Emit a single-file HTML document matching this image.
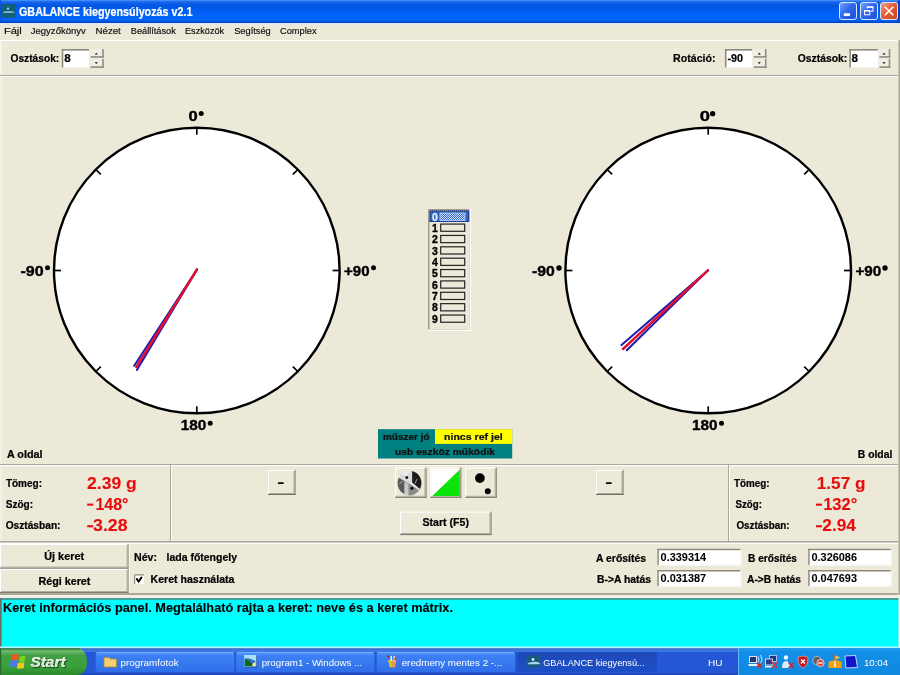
<!DOCTYPE html><html><head><meta charset="utf-8"><title>GBALANCE</title><style>
*{margin:0;padding:0;box-sizing:border-box}
html,body{width:900px;height:675px;overflow:hidden;background:#ece9d8;font-family:"Liberation Sans",sans-serif}
svg{position:absolute;left:0;top:0;will-change:transform;filter:blur(0.3px)}
text{font-family:"Liberation Sans",sans-serif}
</style></head><body>
<svg width="900" height="675" viewBox="0 0 900 675">
<defs>
<linearGradient id="tg" x1="0" y1="0" x2="0" y2="1">
<stop offset="0" stop-color="#4a9bff"/><stop offset="0.08" stop-color="#1a64ec"/><stop offset="0.25" stop-color="#0056e4"/>
<stop offset="0.6" stop-color="#0062f8"/><stop offset="0.85" stop-color="#0066ff"/><stop offset="0.94" stop-color="#0054d8"/><stop offset="1" stop-color="#003cb0"/>
</linearGradient>
<linearGradient id="bg1" x1="0" y1="0" x2="1" y2="1">
<stop offset="0" stop-color="#7aa6ff"/><stop offset="0.45" stop-color="#2f68ee"/><stop offset="1" stop-color="#1a4fd8"/>
</linearGradient>
<linearGradient id="bg2" x1="0" y1="0" x2="1" y2="1">
<stop offset="0" stop-color="#f4a58c"/><stop offset="0.45" stop-color="#e3603a"/><stop offset="1" stop-color="#c94420"/>
</linearGradient>
<linearGradient id="tbar" x1="0" y1="0" x2="0" y2="1">
<stop offset="0" stop-color="#3c81f3"/><stop offset="0.12" stop-color="#2d6fe8"/><stop offset="0.5" stop-color="#245edb"/><stop offset="0.9" stop-color="#1f56d2"/><stop offset="1" stop-color="#1941a5"/>
</linearGradient>
<linearGradient id="tbtn" x1="0" y1="0" x2="0" y2="1">
<stop offset="0" stop-color="#5b9cfb"/><stop offset="0.2" stop-color="#3c80f4"/><stop offset="1" stop-color="#2f6fea"/>
</linearGradient>
<linearGradient id="tbtna" x1="0" y1="0" x2="0" y2="1">
<stop offset="0" stop-color="#1e48b8"/><stop offset="1" stop-color="#1c4fc8"/>
</linearGradient>
<linearGradient id="start" x1="0" y1="0" x2="0" y2="1">
<stop offset="0" stop-color="#5aa85c"/><stop offset="0.12" stop-color="#6ab86c"/><stop offset="0.25" stop-color="#42a044"/><stop offset="0.7" stop-color="#38a03a"/><stop offset="1" stop-color="#2a8a2c"/>
</linearGradient>
<linearGradient id="tray" x1="0" y1="0" x2="0" y2="1">
<stop offset="0" stop-color="#1c9ef0"/><stop offset="0.15" stop-color="#1290e8"/><stop offset="1" stop-color="#0f88de"/>
</linearGradient>
<radialGradient id="disc" cx="0.45" cy="0.4" r="0.6">
<stop offset="0" stop-color="#f0f0f0"/><stop offset="0.5" stop-color="#9a9a9a"/><stop offset="1" stop-color="#303030"/>
</radialGradient>
<filter id="bl2" x="-0.2" y="-0.2" width="1.4" height="1.4"><feGaussianBlur stdDeviation="0.5"/></filter>
<pattern id="hatch" width="2" height="2" patternUnits="userSpaceOnUse"><rect width="2" height="2" fill="#3a68c8"/><rect width="1" height="1" fill="#c8e0ff"/><rect x="1" y="1" width="1" height="1" fill="#c8e0ff"/></pattern>
</defs>
<rect x="0" y="0" width="900" height="23" fill="url(#tg)"/>
<rect x="0" y="23" width="900" height="1.5" fill="#dfe6f4"/>
<rect x="0" y="0" width="1.2" height="23" fill="#0a48d8" opacity="0.7"/>
<rect x="1.8" y="4" width="14" height="13.8" fill="#125f78"/>
<g filter="url(#bl2)" opacity="0.75"><circle cx="8" cy="8.6" r="1.2" fill="#d8ecff"/><path d="M2.8 12.4 Q5 10.5 8 11.2 Q11 10.5 14.5 12.2 L14.2 13 H3 Z" fill="#a0d0e0"/></g>
<text x="19" y="16" font-size="12.2" fill="#fff" font-weight="bold" textLength="173.5" lengthAdjust="spacingAndGlyphs" stroke="#fff" stroke-width="0.22">GBALANCE kiegyensúlyozás v2.1</text>
<rect x="839.5" y="2.5" width="17" height="17" rx="2.5" fill="url(#bg1)" stroke="#dce8ff" stroke-width="1"/>
<rect x="860.5" y="2.5" width="17" height="17" rx="2.5" fill="url(#bg1)" stroke="#dce8ff" stroke-width="1"/>
<rect x="880.5" y="2.5" width="17" height="17" rx="2.5" fill="url(#bg2)" stroke="#dce8ff" stroke-width="1"/>
<rect x="843.8" y="13.2" width="6.1" height="2.8" fill="#fff"/>
<rect x="864.6" y="10.5" width="5.2" height="4.3" fill="none" stroke="#fff" stroke-width="1"/><rect x="864.1" y="10" width="6" height="1.6" fill="#fff"/>
<path d="M867.3 8.5V6.9H873V11.2H870.5" fill="none" stroke="#fff" stroke-width="1"/><rect x="866.8" y="6.4" width="6.7" height="1.4" fill="#fff"/>
<path d="M884.8 6.8L893.3 15.2M893.3 6.8L884.8 15.2" stroke="#fff" stroke-width="1.6"/>
<rect x="898" y="0" width="2" height="23" fill="#0a2fa0" opacity="0.6"/>
<text x="3.9000000000000004" y="34" font-size="9.4" fill="#111" textLength="17.9" lengthAdjust="spacingAndGlyphs" stroke="#111" stroke-width="0.18">Fájl</text>
<text x="30.7" y="34" font-size="9.4" fill="#111" textLength="55.2" lengthAdjust="spacingAndGlyphs" stroke="#111" stroke-width="0.18">Jegyzőkönyv</text>
<text x="95.5" y="34" font-size="9.4" fill="#111" textLength="25.3" lengthAdjust="spacingAndGlyphs" stroke="#111" stroke-width="0.18">Nézet</text>
<text x="130.8" y="34" font-size="9.4" fill="#111" textLength="45.0" lengthAdjust="spacingAndGlyphs" stroke="#111" stroke-width="0.18">Beállítások</text>
<text x="185.0" y="34" font-size="9.4" fill="#111" textLength="39.2" lengthAdjust="spacingAndGlyphs" stroke="#111" stroke-width="0.18">Eszközök</text>
<text x="234.2" y="34" font-size="9.4" fill="#111" textLength="36.6" lengthAdjust="spacingAndGlyphs" stroke="#111" stroke-width="0.18">Segítség</text>
<text x="280.0" y="34" font-size="9.4" fill="#111" textLength="36.6" lengthAdjust="spacingAndGlyphs" stroke="#111" stroke-width="0.18">Complex</text>
<rect x="0" y="40" width="898" height="1" fill="#fff"/>
<rect x="0.5" y="40" width="1" height="35" fill="#fff"/>
<rect x="0.5" y="77" width="1" height="387" fill="#fafaf6"/>
<rect x="0.5" y="466" width="1" height="75" fill="#fafaf6"/>
<rect x="0" y="75" width="898" height="1" fill="#aca899"/>
<rect x="0" y="76" width="898" height="1" fill="#fff"/>
<rect x="898.5" y="40" width="1.5" height="555" fill="#aca899"/>
<text x="10.5" y="61.6" font-size="10.9" fill="#000" font-weight="bold" textLength="48.7" lengthAdjust="spacingAndGlyphs" stroke="#000" stroke-width="0.22">Osztások:</text>
<rect x="61.7" y="49" width="27.4" height="18.5" fill="#fff"/>
<rect x="61.7" y="49" width="27.4" height="1.6" fill="#8d8a7c"/>
<rect x="61.7" y="49" width="1.6" height="18.5" fill="#8d8a7c"/>
<text x="64.3" y="61.8" font-size="11.2" fill="#000" font-weight="bold" textLength="6.5" lengthAdjust="spacingAndGlyphs" stroke="#000" stroke-width="0.22">8</text>
<rect x="89.1" y="49" width="14.7" height="8.7" fill="#f0eee4"/>
<rect x="102.2" y="49" width="1.6" height="8.7" fill="#8f8c7e"/>
<rect x="90.6" y="56.1" width="13.2" height="1.6" fill="#8f8c7e"/>
<path d="M94.69999999999999 54.6L96.29999999999998 52.7L97.89999999999998 54.6Z" fill="#111"/>
<rect x="89.1" y="58.9" width="14.7" height="9" fill="#f0eee4"/>
<rect x="102.2" y="58.9" width="1.6" height="9" fill="#8f8c7e"/>
<rect x="90.6" y="66.30000000000001" width="13.2" height="1.6" fill="#8f8c7e"/>
<path d="M94.69999999999999 62.199999999999996L96.29999999999998 64.0L97.89999999999998 62.199999999999996Z" fill="#111"/>
<text x="673.1" y="61.6" font-size="10.9" fill="#000" font-weight="bold" textLength="42.5" lengthAdjust="spacingAndGlyphs" stroke="#000" stroke-width="0.22">Rotáció:</text>
<rect x="724.9" y="49" width="27.5" height="18.5" fill="#fff"/>
<rect x="724.9" y="49" width="27.5" height="1.6" fill="#8d8a7c"/>
<rect x="724.9" y="49" width="1.6" height="18.5" fill="#8d8a7c"/>
<text x="727.5" y="61.8" font-size="11.2" fill="#000" font-weight="bold" textLength="15.6" lengthAdjust="spacingAndGlyphs" stroke="#000" stroke-width="0.22">-90</text>
<rect x="752.4" y="49" width="14.1" height="8.7" fill="#f0eee4"/>
<rect x="764.9" y="49" width="1.6" height="8.7" fill="#8f8c7e"/>
<rect x="753.9" y="56.1" width="12.6" height="1.6" fill="#8f8c7e"/>
<path d="M757.6999999999999 54.6L759.3 52.7L760.9 54.6Z" fill="#111"/>
<rect x="752.4" y="58.9" width="14.1" height="9" fill="#f0eee4"/>
<rect x="764.9" y="58.9" width="1.6" height="9" fill="#8f8c7e"/>
<rect x="753.9" y="66.30000000000001" width="12.6" height="1.6" fill="#8f8c7e"/>
<path d="M757.6999999999999 62.199999999999996L759.3 64.0L760.9 62.199999999999996Z" fill="#111"/>
<text x="797.8" y="61.6" font-size="10.9" fill="#000" font-weight="bold" textLength="49.4" lengthAdjust="spacingAndGlyphs" stroke="#000" stroke-width="0.22">Osztások:</text>
<rect x="849.3" y="49" width="28.6" height="18.5" fill="#fff"/>
<rect x="849.3" y="49" width="28.6" height="1.6" fill="#8d8a7c"/>
<rect x="849.3" y="49" width="1.6" height="18.5" fill="#8d8a7c"/>
<text x="851.5" y="61.8" font-size="11.2" fill="#000" font-weight="bold" textLength="6.5" lengthAdjust="spacingAndGlyphs" stroke="#000" stroke-width="0.22">8</text>
<rect x="877.9" y="49" width="12.4" height="8.7" fill="#f0eee4"/>
<rect x="888.6999999999999" y="49" width="1.6" height="8.7" fill="#8f8c7e"/>
<rect x="879.4" y="56.1" width="10.9" height="1.6" fill="#8f8c7e"/>
<path d="M882.35 54.6L883.95 52.7L885.5500000000001 54.6Z" fill="#111"/>
<rect x="877.9" y="58.9" width="12.4" height="9" fill="#f0eee4"/>
<rect x="888.6999999999999" y="58.9" width="1.6" height="9" fill="#8f8c7e"/>
<rect x="879.4" y="66.30000000000001" width="10.9" height="1.6" fill="#8f8c7e"/>
<path d="M882.35 62.199999999999996L883.95 64.0L885.5500000000001 62.199999999999996Z" fill="#111"/>
<circle cx="196.8" cy="270.5" r="142.8" fill="#fff" stroke="#000" stroke-width="2.4"/>
<line x1="196.80" y1="128.00" x2="196.80" y2="134.70" stroke="#000" stroke-width="1.7"/>
<line x1="297.56" y1="169.74" x2="292.83" y2="174.47" stroke="#000" stroke-width="1.7"/>
<line x1="339.30" y1="270.50" x2="332.60" y2="270.50" stroke="#000" stroke-width="1.7"/>
<line x1="297.56" y1="371.26" x2="292.83" y2="366.53" stroke="#000" stroke-width="1.7"/>
<line x1="196.80" y1="413.00" x2="196.80" y2="406.30" stroke="#000" stroke-width="1.7"/>
<line x1="96.04" y1="371.26" x2="100.77" y2="366.53" stroke="#000" stroke-width="1.7"/>
<line x1="54.30" y1="270.50" x2="61.00" y2="270.50" stroke="#000" stroke-width="1.7"/>
<line x1="96.04" y1="169.74" x2="100.77" y2="174.47" stroke="#000" stroke-width="1.7"/>
<circle cx="708.2" cy="270.5" r="142.8" fill="#fff" stroke="#000" stroke-width="2.4"/>
<line x1="708.20" y1="128.00" x2="708.20" y2="134.70" stroke="#000" stroke-width="1.7"/>
<line x1="808.96" y1="169.74" x2="804.23" y2="174.47" stroke="#000" stroke-width="1.7"/>
<line x1="850.70" y1="270.50" x2="844.00" y2="270.50" stroke="#000" stroke-width="1.7"/>
<line x1="808.96" y1="371.26" x2="804.23" y2="366.53" stroke="#000" stroke-width="1.7"/>
<line x1="708.20" y1="413.00" x2="708.20" y2="406.30" stroke="#000" stroke-width="1.7"/>
<line x1="607.44" y1="371.26" x2="612.17" y2="366.53" stroke="#000" stroke-width="1.7"/>
<line x1="565.70" y1="270.50" x2="572.40" y2="270.50" stroke="#000" stroke-width="1.7"/>
<line x1="607.44" y1="169.74" x2="612.17" y2="174.47" stroke="#000" stroke-width="1.7"/>
<text x="188.4" y="121" font-size="14.6" fill="#000" font-weight="bold" textLength="9.2" lengthAdjust="spacingAndGlyphs" stroke="#000" stroke-width="0.4">0</text>
<circle cx="201.2" cy="113.5" r="2.5" fill="#000"/>
<text x="20.4" y="275.7" font-size="14.6" fill="#000" font-weight="bold" textLength="23.2" lengthAdjust="spacingAndGlyphs" stroke="#000" stroke-width="0.4">-90</text>
<circle cx="47.5" cy="267.8" r="2.5" fill="#000"/>
<text x="344.09999999999997" y="275.7" font-size="14.6" fill="#000" font-weight="bold" textLength="25.5" lengthAdjust="spacingAndGlyphs" stroke="#000" stroke-width="0.4">+90</text>
<circle cx="373.5" cy="267.8" r="2.5" fill="#000"/>
<text x="180.70000000000002" y="430.3" font-size="14.6" fill="#000" font-weight="bold" textLength="25.6" lengthAdjust="spacingAndGlyphs" stroke="#000" stroke-width="0.4">180</text>
<circle cx="210.2" cy="423.2" r="2.5" fill="#000"/>
<text x="699.6999999999999" y="121" font-size="14.6" fill="#000" font-weight="bold" textLength="10.2" lengthAdjust="spacingAndGlyphs" stroke="#000" stroke-width="0.4">0</text>
<circle cx="712.65" cy="113.64999999999998" r="2.6499999999999773" fill="#000"/>
<text x="532.1" y="275.7" font-size="14.6" fill="#000" font-weight="bold" textLength="22.8" lengthAdjust="spacingAndGlyphs" stroke="#000" stroke-width="0.4">-90</text>
<circle cx="559.0" cy="268.00000000000006" r="2.7000000000000455" fill="#000"/>
<text x="855.4" y="275.7" font-size="14.6" fill="#000" font-weight="bold" textLength="25.9" lengthAdjust="spacingAndGlyphs" stroke="#000" stroke-width="0.4">+90</text>
<circle cx="885.0" cy="268.00000000000006" r="2.7000000000000455" fill="#000"/>
<text x="692.1" y="430.3" font-size="14.6" fill="#000" font-weight="bold" textLength="25.5" lengthAdjust="spacingAndGlyphs" stroke="#000" stroke-width="0.4">180</text>
<circle cx="721.5" cy="423.2" r="2.5" fill="#000"/>
<g stroke="#1c1cb4" stroke-width="2" stroke-linecap="round">
<line x1="197" y1="269.5" x2="134.2" y2="365.8"/><line x1="197" y1="269.5" x2="136.9" y2="369.9"/>
<line x1="708" y1="270.3" x2="621.5" y2="345.1"/><line x1="708" y1="270.3" x2="626.8" y2="350.2"/>
</g><g stroke="#e4102c" stroke-width="2.4" stroke-linecap="round">
<line x1="197" y1="269.5" x2="136.3" y2="367"/><line x1="708" y1="270.3" x2="623" y2="349"/>
</g>
<rect x="428" y="209" width="43" height="122" fill="#fff"/>
<rect x="428" y="209" width="41.5" height="120.5" fill="#9d9a8c"/>
<rect x="429.5" y="210.5" width="40" height="119" fill="#ece9d8"/>
<rect x="429.5" y="210.5" width="39.7" height="11.5" fill="#3462c0"/>
<rect x="430" y="211" width="38.7" height="10.5" fill="none" stroke="#0a1a40" stroke-width="1" stroke-dasharray="1 1"/>
<text x="432" y="220.5" font-size="10.2" fill="#e0ecff" font-weight="bold" textLength="5.8" lengthAdjust="spacingAndGlyphs" stroke="#e0ecff" stroke-width="0.35">0</text>
<rect x="440" y="213.00" width="25" height="7.6" fill="url(#hatch)" stroke="#b8d4ff" stroke-width="0.8"/>
<text x="432" y="231.87" font-size="10.2" fill="#000" font-weight="bold" textLength="5.8" lengthAdjust="spacingAndGlyphs" stroke="#000" stroke-width="0.35">1</text>
<rect x="440.7" y="224.07" width="24" height="7.2" fill="#ece9d8" stroke="#222" stroke-width="1.2"/>
<text x="432" y="243.24" font-size="10.2" fill="#000" font-weight="bold" textLength="5.8" lengthAdjust="spacingAndGlyphs" stroke="#000" stroke-width="0.35">2</text>
<rect x="440.7" y="235.44" width="24" height="7.2" fill="#ece9d8" stroke="#222" stroke-width="1.2"/>
<text x="432" y="254.61" font-size="10.2" fill="#000" font-weight="bold" textLength="5.8" lengthAdjust="spacingAndGlyphs" stroke="#000" stroke-width="0.35">3</text>
<rect x="440.7" y="246.81" width="24" height="7.2" fill="#ece9d8" stroke="#222" stroke-width="1.2"/>
<text x="432" y="265.98" font-size="10.2" fill="#000" font-weight="bold" textLength="5.8" lengthAdjust="spacingAndGlyphs" stroke="#000" stroke-width="0.35">4</text>
<rect x="440.7" y="258.18" width="24" height="7.2" fill="#ece9d8" stroke="#222" stroke-width="1.2"/>
<text x="432" y="277.35" font-size="10.2" fill="#000" font-weight="bold" textLength="5.8" lengthAdjust="spacingAndGlyphs" stroke="#000" stroke-width="0.35">5</text>
<rect x="440.7" y="269.55" width="24" height="7.2" fill="#ece9d8" stroke="#222" stroke-width="1.2"/>
<text x="432" y="288.72" font-size="10.2" fill="#000" font-weight="bold" textLength="5.8" lengthAdjust="spacingAndGlyphs" stroke="#000" stroke-width="0.35">6</text>
<rect x="440.7" y="280.92" width="24" height="7.2" fill="#ece9d8" stroke="#222" stroke-width="1.2"/>
<text x="432" y="300.09" font-size="10.2" fill="#000" font-weight="bold" textLength="5.8" lengthAdjust="spacingAndGlyphs" stroke="#000" stroke-width="0.35">7</text>
<rect x="440.7" y="292.29" width="24" height="7.2" fill="#ece9d8" stroke="#222" stroke-width="1.2"/>
<text x="432" y="311.46" font-size="10.2" fill="#000" font-weight="bold" textLength="5.8" lengthAdjust="spacingAndGlyphs" stroke="#000" stroke-width="0.35">8</text>
<rect x="440.7" y="303.66" width="24" height="7.2" fill="#ece9d8" stroke="#222" stroke-width="1.2"/>
<text x="432" y="322.83" font-size="10.2" fill="#000" font-weight="bold" textLength="5.8" lengthAdjust="spacingAndGlyphs" stroke="#000" stroke-width="0.35">9</text>
<rect x="440.7" y="315.03" width="24" height="7.2" fill="#ece9d8" stroke="#222" stroke-width="1.2"/>
<rect x="378" y="429.2" width="134.2" height="29.3" fill="#008080"/>
<rect x="435" y="429.2" width="77.2" height="14.7" fill="#ffff00"/>
<text x="383" y="439.7" font-size="9.4" fill="#101010" font-weight="bold" textLength="46.5" lengthAdjust="spacingAndGlyphs" stroke="#101010" stroke-width="0.22">műszer jó</text>
<text x="444" y="439.7" font-size="9.8" fill="#101010" font-weight="bold" textLength="58.8" lengthAdjust="spacingAndGlyphs" stroke="#101010" stroke-width="0.22">nincs ref jel</text>
<text x="395" y="454.8" font-size="9.7" fill="#101010" font-weight="bold" textLength="100" lengthAdjust="spacingAndGlyphs" stroke="#101010" stroke-width="0.22">usb eszköz működik</text>
<text x="7" y="457.5" font-size="10.4" fill="#000" font-weight="bold" textLength="35.5" lengthAdjust="spacingAndGlyphs" stroke="#000" stroke-width="0.22">A oldal</text>
<text x="857.8" y="457.5" font-size="10.4" fill="#000" font-weight="bold" textLength="34.5" lengthAdjust="spacingAndGlyphs" stroke="#000" stroke-width="0.22">B oldal</text>
<rect x="0" y="464" width="898" height="1" fill="#aca899"/>
<rect x="0" y="465" width="898" height="1" fill="#fff"/>
<rect x="170" y="465" width="1" height="77" fill="#aca899"/>
<rect x="171" y="466" width="1" height="76" fill="#fff"/>
<rect x="728" y="465" width="1" height="77" fill="#aca899"/>
<rect x="729" y="466" width="1" height="76" fill="#fff"/>
<rect x="0" y="541" width="898" height="1.5" fill="#aca899"/>
<rect x="0" y="543" width="898" height="1" fill="#fff"/>
<text x="5.9" y="487" font-size="10.2" fill="#000" font-weight="bold" textLength="36.1" lengthAdjust="spacingAndGlyphs" stroke="#000" stroke-width="0.22">Tömeg:</text>
<text x="5.7" y="508" font-size="10.2" fill="#000" font-weight="bold" textLength="27.3" lengthAdjust="spacingAndGlyphs" stroke="#000" stroke-width="0.22">Szög:</text>
<text x="5.7" y="529" font-size="10.2" fill="#000" font-weight="bold" textLength="54.8" lengthAdjust="spacingAndGlyphs" stroke="#000" stroke-width="0.22">Osztásban:</text>
<text x="733.9000000000001" y="487" font-size="10.2" fill="#000" font-weight="bold" textLength="35.6" lengthAdjust="spacingAndGlyphs" stroke="#000" stroke-width="0.22">Tömeg:</text>
<text x="735.5" y="508" font-size="10.2" fill="#000" font-weight="bold" textLength="26.5" lengthAdjust="spacingAndGlyphs" stroke="#000" stroke-width="0.22">Szög:</text>
<text x="736.4000000000001" y="529" font-size="10.2" fill="#000" font-weight="bold" textLength="53.1" lengthAdjust="spacingAndGlyphs" stroke="#000" stroke-width="0.22">Osztásban:</text>
<text x="87.10000000000001" y="488.5" font-size="17.0" fill="#e80c0c" font-weight="bold" textLength="49.7" lengthAdjust="spacingAndGlyphs" stroke="#e80c0c" stroke-width="0.1">2.39 g</text>
<rect x="87.2" y="503.6" width="6.0" height="2.1" fill="#e80c0c"/>
<text x="95.4" y="509.7" font-size="15.71" fill="#e80c0c" font-weight="bold" textLength="33.1" lengthAdjust="spacingAndGlyphs" stroke="#e80c0c" stroke-width="0.1">148°</text>
<rect x="87.2" y="525.2" width="6.0" height="2.1" fill="#e80c0c"/>
<text x="93.10000000000001" y="530.8" font-size="16.43" fill="#e80c0c" font-weight="bold" textLength="34.5" lengthAdjust="spacingAndGlyphs" stroke="#e80c0c" stroke-width="0.1">3.28</text>
<text x="816.8" y="488.5" font-size="17.0" fill="#e80c0c" font-weight="bold" textLength="48.7" lengthAdjust="spacingAndGlyphs" stroke="#e80c0c" stroke-width="0.1">1.57 g</text>
<rect x="816" y="503.6" width="6" height="2.1" fill="#e80c0c"/>
<text x="823.1999999999999" y="509.7" font-size="17.14" fill="#e80c0c" font-weight="bold" textLength="34.1" lengthAdjust="spacingAndGlyphs" stroke="#e80c0c" stroke-width="0.1">132°</text>
<rect x="816" y="525.2" width="6" height="2.1" fill="#e80c0c"/>
<text x="822.3" y="530.8" font-size="17.0" fill="#e80c0c" font-weight="bold" textLength="33.6" lengthAdjust="spacingAndGlyphs" stroke="#e80c0c" stroke-width="0.1">2.94</text>
<rect x="268" y="470" width="27.5" height="25" fill="#ece9d8"/>
<rect x="268" y="470" width="27.5" height="1" fill="#fff"/>
<rect x="268" y="470" width="1" height="25" fill="#fff"/>
<rect x="294.5" y="470" width="1" height="25" fill="#716f64"/>
<rect x="268" y="494" width="27.5" height="1" fill="#716f64"/>
<rect x="293.5" y="471" width="1" height="23" fill="#aca899"/>
<rect x="269" y="493" width="25.5" height="1" fill="#aca899"/>
<rect x="277.8" y="482.2" width="6" height="1.9" rx="0.8" fill="#000"/>
<rect x="596" y="470" width="27.5" height="25" fill="#ece9d8"/>
<rect x="596" y="470" width="27.5" height="1" fill="#fff"/>
<rect x="596" y="470" width="1" height="25" fill="#fff"/>
<rect x="622.5" y="470" width="1" height="25" fill="#716f64"/>
<rect x="596" y="494" width="27.5" height="1" fill="#716f64"/>
<rect x="621.5" y="471" width="1" height="23" fill="#aca899"/>
<rect x="597" y="493" width="25.5" height="1" fill="#aca899"/>
<rect x="605.8" y="482.2" width="6" height="1.9" rx="0.8" fill="#000"/>
<rect x="395" y="467.5" width="31.5" height="30.3" fill="#ece9d8"/>
<rect x="395" y="467.5" width="31.5" height="1" fill="#fff"/>
<rect x="395" y="467.5" width="1" height="30.3" fill="#fff"/>
<rect x="425.5" y="467.5" width="1" height="30.3" fill="#716f64"/>
<rect x="395" y="496.8" width="31.5" height="1" fill="#716f64"/>
<rect x="424.5" y="468.5" width="1" height="28.3" fill="#aca899"/>
<rect x="396" y="495.8" width="29.5" height="1" fill="#aca899"/>
<rect x="430.3" y="467.5" width="31" height="30.3" fill="#ece9d8"/>
<rect x="430.3" y="467.5" width="31" height="1" fill="#fff"/>
<rect x="430.3" y="467.5" width="1" height="30.3" fill="#fff"/>
<rect x="460.3" y="467.5" width="1" height="30.3" fill="#716f64"/>
<rect x="430.3" y="496.8" width="31" height="1" fill="#716f64"/>
<rect x="459.3" y="468.5" width="1" height="28.3" fill="#aca899"/>
<rect x="431.3" y="495.8" width="29" height="1" fill="#aca899"/>
<rect x="465.2" y="467.5" width="31.5" height="30.3" fill="#ece9d8"/>
<rect x="465.2" y="467.5" width="31.5" height="1" fill="#fff"/>
<rect x="465.2" y="467.5" width="1" height="30.3" fill="#fff"/>
<rect x="495.7" y="467.5" width="1" height="30.3" fill="#716f64"/>
<rect x="465.2" y="496.8" width="31.5" height="1" fill="#716f64"/>
<rect x="494.7" y="468.5" width="1" height="28.3" fill="#aca899"/>
<rect x="466.2" y="495.8" width="29.5" height="1" fill="#aca899"/>
<clipPath id="dc"><ellipse cx="409.5" cy="483.1" rx="11.9" ry="12.4"/></clipPath>
<filter id="bl" x="-0.1" y="-0.1" width="1.2" height="1.2"><feGaussianBlur stdDeviation="0.6"/></filter>
<g clip-path="url(#dc)"><g filter="url(#bl)">
<rect x="396" y="469" width="28" height="28" fill="#8a8a8a"/>
<path d="M396 476 L405 481.5 L404.5 497 L396 497 Z" fill="#5a5a5a"/>
<path d="M404.3 481.2 L408.5 484.3 L408.5 497 L404.3 497 Z" fill="#c8c8c8"/>
<path d="M396 469 L412.2 469 L412.2 483 L419.5 489.8 L405 481.3 L396 476 Z" fill="#dadada"/>
<path d="M412.2 469 L424 469 L424 488 L419.5 489.8 L412.2 483 Z" fill="#1c1c1c"/>
<path d="M401 470 L410 470 L407 476 L400 474 Z" fill="#f4f4f4" opacity="0.7"/>
<path d="M415 483.5 L417 479" stroke="#9a9a9a" stroke-width="1"/><path d="M399.5 483.5 L402.5 481.5" stroke="#b8b8b8" stroke-width="1"/>
</g><path d="M410.5 482.5 L419.5 489.8" stroke="#f2f2f2" stroke-width="1.8" opacity="0.9"/>
</g>
<circle cx="406.8" cy="477.6" r="1.4" fill="#000"/><circle cx="411.9" cy="488.2" r="1.5" fill="#000"/>
<rect x="431.5" y="469.2" width="28.3" height="26.8" fill="#fff"/>
<path d="M432.3 496 L459.8 469.5 L459.8 496 Z" fill="#08e408"/>
<circle cx="479.9" cy="478.1" r="4.9" fill="#000"/><circle cx="487.8" cy="491.3" r="3" fill="#000"/>
<rect x="400" y="511.6" width="91.5" height="23.5" fill="#ece9d8"/>
<rect x="400" y="511.6" width="91.5" height="1" fill="#fff"/>
<rect x="400" y="511.6" width="1" height="23.5" fill="#fff"/>
<rect x="490.5" y="511.6" width="1" height="23.5" fill="#716f64"/>
<rect x="400" y="534.1" width="91.5" height="1" fill="#716f64"/>
<rect x="489.5" y="512.6" width="1" height="21.5" fill="#aca899"/>
<rect x="401" y="533.1" width="89.5" height="1" fill="#aca899"/>
<text x="422.5" y="526.3" font-size="10.9" fill="#000" font-weight="bold" textLength="46.5" lengthAdjust="spacingAndGlyphs" stroke="#000" stroke-width="0.22">Start (F5)</text>
<rect x="0" y="544" width="128.7" height="24.6" fill="#ece9d8"/>
<rect x="0" y="544" width="128.7" height="1" fill="#fff"/>
<rect x="0" y="544" width="1" height="24.6" fill="#fff"/>
<rect x="127.69999999999999" y="544" width="1" height="24.6" fill="#716f64"/>
<rect x="0" y="567.6" width="128.7" height="1" fill="#716f64"/>
<rect x="126.69999999999999" y="545" width="1" height="22.6" fill="#aca899"/>
<rect x="1" y="566.6" width="126.69999999999999" height="1" fill="#aca899"/>
<rect x="0" y="569" width="128.7" height="24.1" fill="#ece9d8"/>
<rect x="0" y="569" width="128.7" height="1" fill="#fff"/>
<rect x="0" y="569" width="1" height="24.1" fill="#fff"/>
<rect x="127.69999999999999" y="569" width="1" height="24.1" fill="#716f64"/>
<rect x="0" y="592.1" width="128.7" height="1" fill="#716f64"/>
<rect x="126.69999999999999" y="570" width="1" height="22.1" fill="#aca899"/>
<rect x="1" y="591.1" width="126.69999999999999" height="1" fill="#aca899"/>
<text x="44.2" y="560" font-size="10.5" fill="#000" font-weight="bold" textLength="40" lengthAdjust="spacingAndGlyphs" stroke="#000" stroke-width="0.22">Új keret</text>
<text x="38.4" y="584.5" font-size="10.5" fill="#000" font-weight="bold" textLength="52" lengthAdjust="spacingAndGlyphs" stroke="#000" stroke-width="0.22">Régi keret</text>
<rect x="128.7" y="544" width="1" height="49" fill="#fbfaf4"/>
<rect x="0" y="593" width="898" height="2" fill="#aca899"/>
<rect x="0" y="595" width="898" height="3" fill="#f2f0e6"/>
<text x="134" y="561.4" font-size="10.2" fill="#000" font-weight="bold" textLength="23" lengthAdjust="spacingAndGlyphs" stroke="#000" stroke-width="0.22">Név:</text>
<text x="166.5" y="561.4" font-size="10.4" fill="#000" font-weight="bold" textLength="70.5" lengthAdjust="spacingAndGlyphs" stroke="#000" stroke-width="0.22">lada főtengely</text>
<rect x="134" y="574.2" width="10" height="9.8" fill="#fff"/>
<path d="M134.6 574.8H144M134.6 574.8V584" stroke="#8d8a7c" stroke-width="1.2"/>
<path d="M136.4 578.4L138.6 581.6L141.9 576.9" stroke="#000" stroke-width="1.9" fill="none"/>
<text x="150.6" y="582.8" font-size="10.4" fill="#000" font-weight="bold" textLength="83.8" lengthAdjust="spacingAndGlyphs" stroke="#000" stroke-width="0.22">Keret használata</text>
<text x="596" y="561.5" font-size="10.3" fill="#000" font-weight="bold" textLength="50" lengthAdjust="spacingAndGlyphs" stroke="#000" stroke-width="0.22">A erősítés</text>
<text x="597" y="582.8" font-size="10.3" fill="#000" font-weight="bold" textLength="54" lengthAdjust="spacingAndGlyphs" stroke="#000" stroke-width="0.22">B->A hatás</text>
<text x="748" y="561.5" font-size="10.3" fill="#000" font-weight="bold" textLength="49" lengthAdjust="spacingAndGlyphs" stroke="#000" stroke-width="0.22">B erősítés</text>
<text x="747" y="582.8" font-size="10.3" fill="#000" font-weight="bold" textLength="54" lengthAdjust="spacingAndGlyphs" stroke="#000" stroke-width="0.22">A->B hatás</text>
<rect x="657.3" y="548.7" width="84" height="17" fill="#fff"/>
<rect x="657.3" y="548.7" width="84" height="1.5" fill="#8d8a7c"/>
<rect x="657.3" y="548.7" width="1.5" height="17" fill="#8d8a7c"/>
<rect x="740.3" y="548.7" width="1" height="17" fill="#f4f3ee"/>
<rect x="657.3" y="564.7" width="84" height="1" fill="#f4f3ee"/>
<text x="660.5999999999999" y="561.1" font-size="11" fill="#000" font-weight="bold" textLength="45.5" lengthAdjust="spacingAndGlyphs" stroke="#000" stroke-width="0.05">0.339314</text>
<rect x="657.3" y="570" width="84" height="17" fill="#fff"/>
<rect x="657.3" y="570" width="84" height="1.5" fill="#8d8a7c"/>
<rect x="657.3" y="570" width="1.5" height="17" fill="#8d8a7c"/>
<rect x="740.3" y="570" width="1" height="17" fill="#f4f3ee"/>
<rect x="657.3" y="586" width="84" height="1" fill="#f4f3ee"/>
<text x="660.5999999999999" y="582.4" font-size="11" fill="#000" font-weight="bold" textLength="45.5" lengthAdjust="spacingAndGlyphs" stroke="#000" stroke-width="0.05">0.031387</text>
<rect x="808.2" y="548.7" width="83.5" height="17" fill="#fff"/>
<rect x="808.2" y="548.7" width="83.5" height="1.5" fill="#8d8a7c"/>
<rect x="808.2" y="548.7" width="1.5" height="17" fill="#8d8a7c"/>
<rect x="890.7" y="548.7" width="1" height="17" fill="#f4f3ee"/>
<rect x="808.2" y="564.7" width="83.5" height="1" fill="#f4f3ee"/>
<text x="811.5" y="561.1" font-size="11" fill="#000" font-weight="bold" textLength="45.5" lengthAdjust="spacingAndGlyphs" stroke="#000" stroke-width="0.05">0.326086</text>
<rect x="808.2" y="570" width="83.5" height="17" fill="#fff"/>
<rect x="808.2" y="570" width="83.5" height="1.5" fill="#8d8a7c"/>
<rect x="808.2" y="570" width="1.5" height="17" fill="#8d8a7c"/>
<rect x="890.7" y="570" width="1" height="17" fill="#f4f3ee"/>
<rect x="808.2" y="586" width="83.5" height="1" fill="#f4f3ee"/>
<text x="811.5" y="582.4" font-size="11" fill="#000" font-weight="bold" textLength="45.5" lengthAdjust="spacingAndGlyphs" stroke="#000" stroke-width="0.05">0.047693</text>
<rect x="0" y="595" width="900" height="3.3" fill="#f2f0e6"/>
<rect x="898.5" y="598" width="1.5" height="49" fill="#f4f8f8"/>
<rect x="0" y="598.3" width="898.5" height="49" fill="#00ffff"/>
<rect x="0" y="598.3" width="898.5" height="1.3" fill="#5c6e6a"/>
<rect x="0" y="598.3" width="1.6" height="49" fill="#6d6a5e"/>
<text x="3" y="611.7" font-size="12" fill="#000" font-weight="bold" textLength="450" lengthAdjust="spacingAndGlyphs" stroke="#000" stroke-width="0.1">Keret információs panel. Megtalálható rajta a keret: neve és a keret mátrix.</text>
<rect x="0" y="647" width="900" height="28" fill="#2456d6"/>
<rect x="0" y="646.5" width="900" height="2" fill="#b8f6ff"/>
<rect x="0" y="648.5" width="900" height="1" fill="#3c68b8"/>
<rect x="0" y="649.5" width="900" height="2.5" fill="#3a78e4"/>
<rect x="0" y="673" width="900" height="2" fill="#1c48c0"/>
<path d="M0 648.5 H76 Q87 648.5 87 661.8 Q87 675 76 675 H0 Z" fill="url(#start)"/>
<rect x="0" y="648.5" width="80" height="1" fill="#2a6a2a"/>
<rect x="0" y="648.5" width="1.2" height="26.5" fill="#2a6a2a"/>
<g filter="url(#bl2)">
<path d="M11.5 654.5 L18.6 654 L18.1 660 L11 660.4 Z" fill="#ee5a1e"/>
<path d="M19.7 656.3 L25.3 655.8 L24.6 662 L19.1 662.4 Z" fill="#7cd020"/>
<path d="M10.6 660.6 L17.3 660.1 L16.8 666.5 L9.9 667 Z" fill="#4a78f0"/>
<path d="M17.6 663 L24.2 662.4 L23.7 668.3 L17 668.8 Z" fill="#f6c818"/>
</g>
<text x="30.5" y="666.7" font-size="14.6" fill="#fff" font-weight="bold" font-style="italic" textLength="35" lengthAdjust="spacingAndGlyphs" style="text-shadow:1px 1px 1px #1a4a1a" stroke="#fff" stroke-width="0.22">Start</text>
<rect x="95.7" y="652" width="138.60000000000002" height="20" rx="2" fill="url(#tbtn)"/>
<rect x="96.7" y="652" width="136.60000000000002" height="1" fill="#7fb0ff" opacity="0.7"/>
<text x="120.6" y="665.8" font-size="9.8" fill="#fff" textLength="58" lengthAdjust="spacingAndGlyphs">programfotok</text>
<rect x="236.1" y="652" width="138.4" height="20" rx="2" fill="url(#tbtn)"/>
<rect x="237.1" y="652" width="136.4" height="1" fill="#7fb0ff" opacity="0.7"/>
<text x="261.7" y="665.8" font-size="9.8" fill="#fff" textLength="100.5" lengthAdjust="spacingAndGlyphs">program1 - Windows ...</text>
<rect x="376.7" y="652" width="138.3" height="20" rx="2" fill="url(#tbtn)"/>
<rect x="377.7" y="652" width="136.3" height="1" fill="#7fb0ff" opacity="0.7"/>
<text x="401.7" y="665.8" font-size="9.8" fill="#fff" textLength="100.5" lengthAdjust="spacingAndGlyphs">eredmeny mentes 2 -...</text>
<rect x="517.2" y="652" width="139.79999999999995" height="20" rx="2" fill="url(#tbtna)"/>
<text x="543.2" y="665.8" font-size="9.8" fill="#fff" textLength="101.5" lengthAdjust="spacingAndGlyphs">GBALANCE kiegyensú...</text>
<text x="708" y="665.8" font-size="9.8" fill="#fff" textLength="14.5" lengthAdjust="spacingAndGlyphs">HU</text>
<path d="M104 657.5h5l1.5 1.5h6v8h-12.5z" fill="#f4d070" stroke="#b08a30" stroke-width="0.8"/>
<g filter="url(#bl2)"><rect x="245" y="656" width="12" height="11.5" fill="#1a2a60" opacity="0.6"/>
<rect x="244.3" y="655" width="12" height="11.5" fill="#a8e0f8"/>
<path d="M244.8 658.5 Q250 657.5 256 662 V666 H244.8 Z" fill="#2a70c0"/>
<path d="M244.8 659.5 Q248 659 253 665 L255.8 666 H244.8 Z" fill="#0a6a10"/>
<path d="M253 663 L255.8 662 V666 H252 Z" fill="#e8f0a0"/></g>
<g filter="url(#bl2)"><path d="M388 660 L390 667.5 H395 L396.5 660 Z" fill="#e89850"/>
<path d="M388.2 660 L389.7 667 H391.5 L391 660 Z" fill="#c8c830"/>
<rect x="390.5" y="656" width="1.5" height="5" fill="#fff0f0"/><rect x="393.5" y="656" width="1.5" height="5" fill="#f0d8d8"/>
<circle cx="388.5" cy="656.5" r="1.3" fill="#a03030"/><circle cx="395.5" cy="659" r="1.2" fill="#b04040"/></g>
<rect x="526.6" y="655.5" width="14" height="12" fill="#1a5a80"/>
<g filter="url(#bl2)"><circle cx="533" cy="659.5" r="1.4" fill="#d8ecff"/><path d="M527.5 663.5 Q530 661.5 533 662 Q536 661.3 540 663 L539.5 664.3 H528 Z" fill="#a8d8e8"/></g>
<rect x="738" y="648" width="162" height="27" fill="url(#tray)"/>
<rect x="738" y="648" width="1" height="27" fill="#5fb8f8"/>
<g filter="url(#bl2)">
<rect x="749.5" y="656.5" width="7" height="6" fill="#28307a" stroke="#d8e4f4" stroke-width="1"/>
<rect x="748.5" y="664" width="9" height="2" fill="#e8f0f8"/>
<path d="M758 656.5 Q760 659.5 758 662.5 M760.5 655 Q763.5 659.5 760.5 664" stroke="#e0ecff" stroke-width="0.9" fill="none"/>
<path d="M757 663 L762 668 M762 663 L757 668" stroke="#d02828" stroke-width="1.5"/>
<rect x="769.5" y="655.5" width="7" height="6" fill="#28307a" stroke="#b8c8ec" stroke-width="0.9"/>
<rect x="765.5" y="659" width="7" height="6" fill="#303884" stroke="#d8e4f4" stroke-width="0.9"/>
<rect x="765" y="666" width="8" height="1.5" fill="#f0e8ff"/>
<path d="M771.5 662 L777.5 668 M777.5 662 L771.5 668" stroke="#d83838" stroke-width="1.6"/>
<circle cx="786" cy="657.5" r="2.2" fill="#e8f4ff"/>
<path d="M782 668 Q782 661 786 661 Q790 661 790 668 Z" fill="#d8ecff"/>
<path d="M788.5 662.5 L794 668 M794 662.5 L788.5 668" stroke="#d02828" stroke-width="1.5"/>
<path d="M798 657 Q803 655 808 657 L807.5 663 Q806 666.5 803 668 Q800 666.5 798.5 663 Z" fill="#c81818" stroke="#f0d0d0" stroke-width="0.5"/>
<path d="M801 659.5 L805 663.5 M805 659.5 L801 663.5" stroke="#fff" stroke-width="1.4"/>
<circle cx="817" cy="660.5" r="4.2" fill="#606060" stroke="#c8c8c8" stroke-width="0.8"/>
<circle cx="820.5" cy="663" r="3.6" fill="#e03a3a" stroke="#fff" stroke-width="0.7"/>
<rect x="818.3" y="662.3" width="4.4" height="1.4" fill="#fff"/>
<path d="M828.5 668 L828.5 662 Q832 660 835 660 Q838.5 660 841.5 662 L841.5 668 Z" fill="#f0a010"/>
<rect x="834" y="655" width="1.6" height="8" fill="#c08030"/>
<path d="M835.5 655.5 L840.5 657.5 L835.5 659.5 Z" fill="#e8c060"/>
<rect x="834" y="661" width="1.6" height="6" fill="#fff0c0"/>
<path d="M845 656 L855.5 655.5 L857.5 667.5 L846 668 Z" fill="#0c14c8" stroke="#c8d0ff" stroke-width="1"/>
</g>
<text x="864" y="665.8" font-size="9.8" fill="#fff" textLength="24" lengthAdjust="spacingAndGlyphs">10:04</text>
</svg></body></html>
